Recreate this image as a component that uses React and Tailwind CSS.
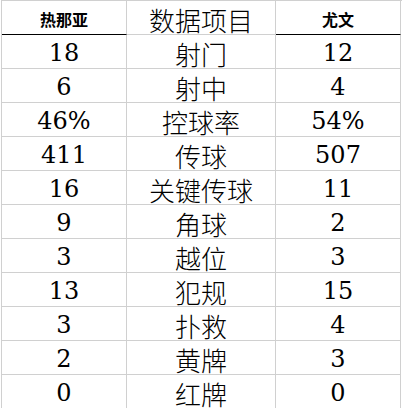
import React from "react";

const rows = [
  ["18", "射门", "12"],
  ["6", "射中", "4"],
  ["46%", "控球率", "54%"],
  ["411", "传球", "507"],
  ["16", "关键传球", "11"],
  ["9", "角球", "2"],
  ["3", "越位", "3"],
  ["13", "犯规", "15"],
  ["3", "扑救", "4"],
  ["2", "黄牌", "3"],
  ["0", "红牌", "0"],
];

export default function App() {
  return (
    <div className="w-[402px] h-[408px] overflow-hidden bg-white text-black">
      <div className="ml-px flex flex-col border-l border-t border-[#d0d0d0]">
        <div className="flex h-[34px]">
          <div className="w-[125px] h-[34px] border-r border-b border-r-[#d0d0d0] border-b-black flex items-center justify-center pt-[2px] font-['Noto_Sans_CJK_SC',sans-serif] font-bold text-[16px] leading-none">
            热那亚
          </div>
          <div className="w-[149px] h-[34px] border-r border-b border-[#d0d0d0] flex items-end justify-center pb-[1px] font-['Noto_Sans_CJK_SC',sans-serif] font-light text-[26px] leading-none">
            数据项目
          </div>
          <div className="w-[125px] h-[34px] border-r border-b border-r-[#d0d0d0] border-b-black flex items-center justify-center pt-[2px] font-['Noto_Sans_CJK_SC',sans-serif] font-bold text-[16px] leading-none">
            尤文
          </div>
        </div>
        {rows.map((r, i) => (
          <div key={i} className="flex h-[34px]">
            <div className="w-[125px] h-[34px] border-r border-b border-[#d0d0d0] flex items-end justify-center pb-[3px] font-['DejaVu_Serif',serif] font-light text-[24px] leading-none">
              {r[0]}
            </div>
            <div className="w-[149px] h-[34px] border-r border-b border-[#d0d0d0] flex items-end justify-center pb-[1px] font-['Noto_Sans_CJK_SC',sans-serif] font-light text-[26px] leading-none">
              {r[1]}
            </div>
            <div className="w-[125px] h-[34px] border-r border-b border-[#d0d0d0] flex items-end justify-center pb-[3px] font-['DejaVu_Serif',serif] font-light text-[24px] leading-none">
              {r[2]}
            </div>
          </div>
        ))}
      </div>
    </div>
  );
}
